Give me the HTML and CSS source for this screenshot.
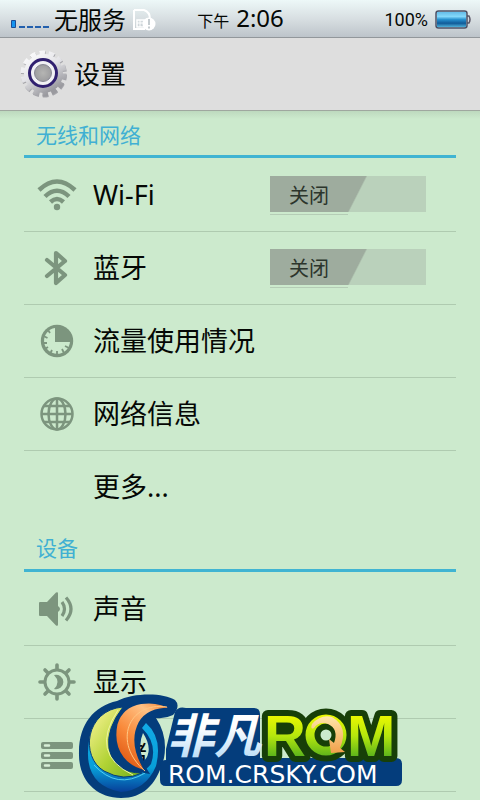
FILE: index.html
```html
<!DOCTYPE html>
<html lang="zh-CN">
<head>
<meta charset="utf-8">
<meta name="viewport" content="width=device-width, initial-scale=1">
<title>设置</title>
<link rel="stylesheet" href="styles.css">
</head>
<body>
<div class="status">
  <div class="status-side">
    <svg class="signal" width="40" height="10" viewBox="0 0 40 10" aria-hidden="true">
      <path d="M1.500 .5h4v7h-4z" fill="#1594f0" stroke="#1c4d96"/>
      <path d="M9 7h6M17 7h6M25 7h6M33 7h6" stroke="#2360ad" stroke-width="2"/>
    </svg>
    <span class="carrier">无服务</span>
    <svg class="sim" width="24" height="24" viewBox="0 0 24 24" aria-hidden="true">
      <path d="M2 2h10q6 2 6 9M2 2v19h11" fill="none" stroke="#fff" stroke-width="2"/>
      <path d="M5 12h7v7H5z" fill="none" stroke="#fff" stroke-width="1.500"/>
      <path d="M5 15h7M8 12v7" stroke="#fff"/>
      <circle cx="17" cy="16" r="6.500" fill="#fff"/>
      <path d="M17 11v6M17 18.500v2" stroke="#c5ccd0" stroke-width="2"/>
    </svg>
  </div>
  <div class="clock"><span class="ampm">下午</span><span class="time">2:06</span></div>
  <div class="status-side status-end">
    <span class="percent">100%</span>
    <svg width="36" height="19" viewBox="0 0 36 19" aria-hidden="true">
      <defs><linearGradient id="bat" x2="0" y2="1"><stop stop-color="#65bce8"/><stop offset=".3" stop-color="#84d8fa"/><stop offset=".5" stop-color="#2791cf"/><stop offset=".75" stop-color="#115b99"/><stop offset="1" stop-color="#4fb0d8"/></linearGradient></defs>
      <path d="M32 6h2q2 3.500 0 7h-2" fill="#d5d9df" stroke="#5b5868" stroke-width="1.500"/>
      <rect x="1" y="1" width="31" height="17" rx="2.500" fill="#b9d6e6" stroke="#4c5267" stroke-width="1.500"/>
      <rect x="2" y="2" width="29" height="15" fill="url(#bat)"/>
    </svg>
  </div>
</div>
<header class="header">
  <svg width="48" height="48" viewBox="0 0 48 48" aria-hidden="true">
    <defs>
      <linearGradient id="gear" x2=".6" y2="1"><stop stop-color="#fff"/><stop offset=".5" stop-color="#e4e4e8"/><stop offset="1" stop-color="#9a9a9f"/></linearGradient>
      <radialGradient id="hub"><stop stop-color="#b5b5b3"/><stop offset="1" stop-color="#9d9d9f"/></radialGradient>
    </defs>
    <circle cx="24" cy="24.500" r="20.500" fill="none" stroke="#a5a5aa" stroke-width="5" stroke-dasharray="5.500 3.700"/>
    <circle cx="23.500" cy="23.500" r="20.500" fill="none" stroke="url(#gear)" stroke-width="5" stroke-dasharray="5.500 3.700"/>
    <circle cx="23.500" cy="23.500" r="19.500" fill="url(#gear)"/>
    <circle cx="23" cy="23" r="13.500" fill="#f1f1f4" stroke="#30206f" stroke-width="3"/>
    <circle cx="23" cy="23" r="8.500" fill="url(#hub)" stroke="#888894"/>
  </svg>
  <h1>设置</h1>
</header>
<main>
  <section>
    <h2>无线和网络</h2>
    <ul>
      <li>
        <svg class="icon" viewBox="0 0 42 42" aria-hidden="true"><g fill="none" stroke="currentColor" stroke-width="4.500"><path d="M3 16Q21-1 39 16"/><path d="M9 22.500Q21 11 33 22.500"/><path d="M14.500 28Q21 22 27.500 28"/></g><circle cx="21" cy="33" r="3.200" fill="currentColor"/></svg>
        <label for="wifi">Wi-Fi</label>
        <span class="switch"><input type="checkbox" role="switch" id="wifi"><span class="state">关闭</span></span>
      </li>
      <li>
        <svg class="icon" viewBox="0 0 42 42" aria-hidden="true"><path d="M11 13l18 15-9 8V6l9 8-18 15" fill="none" stroke="currentColor" stroke-width="4.200" stroke-linejoin="round" stroke-linecap="round"/></svg>
        <label for="bluetooth">蓝牙</label>
        <span class="switch"><input type="checkbox" role="switch" id="bluetooth"><span class="state">关闭</span></span>
      </li>
      <li>
        <svg class="icon" viewBox="0 0 42 42" aria-hidden="true"><circle cx="21" cy="21" r="16.200" fill="currentColor"/><path d="M19 8v14h15a13 13 0 1 1-15-14z" fill="#cceacd"/><path d="M12 10l2 3M7.500 16l4 2M7 23h4M9 29l3-2M14 34l2-4M21 35v-4M28 33l-2-4M33 28l-4-2" stroke="currentColor" stroke-width="1.800"/></svg>
        <a href="#data">流量使用情况</a>
      </li>
      <li>
        <svg class="icon" viewBox="0 0 42 42" aria-hidden="true"><g fill="none" stroke="currentColor" stroke-width="2.500"><circle cx="21" cy="21" r="15.500"/><ellipse cx="21" cy="21" rx="8.500" ry="15.500"/><path d="M21 5v32M5 21h32M8 13h26M8 29h26"/></g></svg>
        <a href="#network">网络信息</a>
      </li>
      <li><span class="icon"></span><a href="#more">更多...</a></li>
    </ul>
  </section>
  <section>
    <h2>设备</h2>
    <ul>
      <li>
        <svg class="icon" viewBox="0 0 42 42" aria-hidden="true"><path d="M4 14h7L20 4.500q2-1 2 1V18q4 3 0 6v12.500q0 2-2 1L11 28H4q-1 0-1-1V15q0-1 1-1z" fill="currentColor"/><path d="M26 14q5 7 0 14M30 9.500q10 11.500 0 23" fill="none" stroke="currentColor" stroke-width="3.200"/></svg>
        <a href="#sound">声音</a>
      </li>
      <li>
        <svg class="icon" viewBox="0 0 42 42" aria-hidden="true"><g fill="none" stroke="currentColor" stroke-linecap="round"><circle cx="21" cy="21" r="12" stroke-width="3"/><path d="M21 8V4M21 38v-4M8 21H4M38 21h-4M30 12l3-3M9 33l3-3M12 12L9 9M33 33l-3-3" stroke-width="3.600"/></g><path d="M18 14a7.300 7.300 0 1 1 0 14q7-7 0-14z" fill="currentColor"/></svg>
        <a href="#display">显示</a>
      </li>
      <li>
        <svg class="icon" viewBox="0 0 42 42" aria-hidden="true"><g fill="currentColor"><rect x="5" y="8" width="32" height="7" rx="2"/><rect x="5" y="18" width="32" height="7" rx="2"/><rect x="5" y="28" width="32" height="7" rx="2"/></g><path d="M9 11.500h4M9 21.500h4M9 31.500h4" stroke="#d8f0d8" stroke-width="2.500" stroke-linecap="round"/></svg>
        <a href="#storage">存储</a>
      </li>
    </ul>
  </section>
</main>
<svg class="brand" width="330" height="110" viewBox="74 690 330 110" role="img" aria-label="非凡ROM ROM.CRSKY.COM">
  <defs>
    <linearGradient id="lime" x2="1" y2="1"><stop offset=".2" stop-color="#e2e977"/><stop offset=".55" stop-color="#b2d335"/><stop offset="1" stop-color="#6fae1d"/></linearGradient>
    <linearGradient id="orange" x1="1" x2=".3" y2="1"><stop stop-color="#f06a14"/><stop offset=".3" stop-color="#ffc184"/><stop offset=".65" stop-color="#f98b3c"/><stop offset="1" stop-color="#df5712"/></linearGradient>
    <linearGradient id="sea" x2="0" y2="1"><stop stop-color="#12aae6"/><stop offset=".65" stop-color="#079fd9"/><stop offset="1" stop-color="#073f99"/></linearGradient>
    <linearGradient id="ice" gradientUnits="userSpaceOnUse" x1="0" y1="712" x2="0" y2="760"><stop offset=".3" stop-color="#fff"/><stop offset="1" stop-color="#b8dcf7"/></linearGradient>
    <linearGradient id="leaf" gradientUnits="userSpaceOnUse" x1="0" y1="714" x2="0" y2="758"><stop stop-color="#eef900"/><stop offset=".5" stop-color="#b5e70d"/><stop offset="1" stop-color="#55b01c"/></linearGradient>
    <linearGradient id="peach" x2="0" y2="1"><stop stop-color="#ffe6aa"/><stop offset="1" stop-color="#f2a04b"/></linearGradient>
  </defs>
  <path fill-rule="evenodd" fill="#043d7c" d="M79 752C79 724 94 706 117 701C135 692 164 693 175 700Q181 706 173 715Q165 719 156 718Q168 736 164 758C157 784 144 798 121 798C96 798 78 780 79 752zM143 733Q137 747 144 761Q154 750 143 733z"/>
  <path fill="url(#sea)" d="M89 741Q82 785 121 792Q146 790 156 766Q163 738 146 723L142 728Q158 744 151 764Q139 779 119 777Q96 769 89 741z"/>
  <path d="M94 765Q117 790 145 773" fill="none" stroke="#55cef0"/>
  <path fill="url(#lime)" stroke="#043d7c" stroke-width="1" d="M123 707C85 710 80 757 104 771Q124 782 142 773Q114 773 109 748Q106 729 123 707z"/>
  <path d="M118 710Q89 754 133 775" fill="none" stroke="#eef5a4"/>
  <path fill="url(#orange)" stroke="#043d7c" stroke-width="3" d="M174 709C155 698 124 698 116 724C110 754 129 769 147 772Q129 744 140 723Q148 708 174 709z"/>
  <path d="M167 707C128 701 112 743 145 771" fill="none" stroke="#ffc783"/>
  <path d="M166 760V749L175 712Q178 706 186 708H254Q260 708 260 714V758H396Q402 758 402 764V780Q402 786 396 786H166Q160 786 160 780V766Q160 760 166 760z" fill="#043d7c"/>
  <circle class="brand-ring" cx="326" cy="735" r="16"/>
  <text class="brand-rom" x="264" y="756">R</text>
  <text class="brand-rom" x="347" y="756">M</text>
  <circle cx="326" cy="735" r="16" fill="none" stroke="url(#leaf)" stroke-width="9"/>
  <path d="M312 724Q321 714 332 717Q349 727 340 748L345 752L331 753L329 739L334 743Q339 729 328 724Q319 721 314 728Q310 730 312 724z" fill="url(#peach)"/>
  <text class="brand-cjk" x="167" y="753">非凡</text>
  <text class="brand-url" x="168" y="783">ROM.CRSKY.COM</text>
</svg>
</body>
</html>
```
FILE: styles.css
```css
* { box-sizing: border-box; }

body {
  margin: 0;
  min-height: 100vh;
  position: relative;
  overflow-x: hidden;
  background: #cceacd;
  color: #050805;
  font-family: "Noto Sans", "Noto Sans CJK SC", sans-serif;
}

h1, h2, ul { margin: 0; padding: 0; font-weight: 400; }
svg { flex: none; }

.status {
  display: grid;
  grid-template-columns: 1fr auto 1fr;
  align-items: center;
  height: 38px;
  padding: 0 9px 0 10px;
  border-bottom: 1px solid #92979b;
  background: linear-gradient(#edf8f8, #d8dfe2 50%, #bdc4ca);
  line-height: 36px;
}
.status-side { display: flex; align-items: center; }
.status-end { justify-content: flex-end; gap: 7px; }
.signal { margin-top: 10px; }
.carrier { margin-left: 4px; font-size: 24px; }
.sim { margin-left: 6px; }
.clock { display: flex; align-items: baseline; gap: 7px; }
.ampm { font-size: 16px; }
.time { font-size: 24px; }
.percent { font-family: Roboto, sans-serif; font-size: 18px; }

.header {
  display: flex;
  align-items: center;
  gap: 6px;
  height: 73px;
  padding: 0 20px;
  border-bottom: 1px solid #9fa79f;
  background: #dedede;
}
h1 { font-size: 26px; line-height: 36px; }

main { padding: 0 24px; background: linear-gradient(#bdd9be, #cceacd 8px); }
h2 {
  height: 48px;
  padding: 8px 12px 0;
  border-bottom: 3px solid #40b4d2;
  color: #40b0d3;
  font-size: 21px;
  line-height: 32px;
}
section:first-child h2 { height: 47px; }
ul { padding-top: 1px; list-style: none; }
li {
  display: flex;
  align-items: center;
  height: 73px;
  padding: 0 30px 0 12px;
  border-bottom: 1px solid #afcbb0;
}
section:first-child li:last-child { border-color: transparent; }
.icon { width: 42px; height: 42px; margin-right: 15px; color: #7c957e; }
li a, li label {
  flex: 1;
  color: inherit;
  font-size: 27px;
  line-height: 40px;
  text-decoration: none;
}

.switch {
  display: grid;
  grid-template-rows: 36px;
  width: 156px;
  height: 36px;
  margin-bottom: 2px;
}
.switch > * { grid-area: 1 / 1; }
.switch input {
  appearance: none;
  width: 100%;
  height: 36px;
  margin: 0;
  background: linear-gradient(117deg, #9eac9e 55%, #bad1bb 56%);
}
.switch::after {
  content: "";
  grid-area: 1 / 1;
  align-self: end;
  width: 78px;
  height: 1px;
  margin-bottom: -3px;
  background: #b5cdb6;
}
.state {
  padding-left: 19px;
  color: #2c352c;
  font-size: 20px;
  line-height: 40px;
  pointer-events: none;
}

.brand { position: absolute; left: 74px; top: 690px; }
.brand-cjk {
  fill: url(#ice);
  font-family: "Noto Sans CJK SC", sans-serif;
  font-size: 47px;
  font-style: italic;
  font-weight: 700;
}
.brand-rom {
  fill: url(#leaf);
  stroke: #173f08;
  stroke-width: 12px;
  stroke-linejoin: round;
  paint-order: stroke;
  font-family: "Liberation Sans", sans-serif;
  font-size: 58px;
  font-weight: 700;
}
.brand-ring { fill: none; stroke: #173f08; stroke-width: 21px; }
.brand-url { fill: #fff; font-family: "DejaVu Sans", sans-serif; font-size: 25px; }
```
